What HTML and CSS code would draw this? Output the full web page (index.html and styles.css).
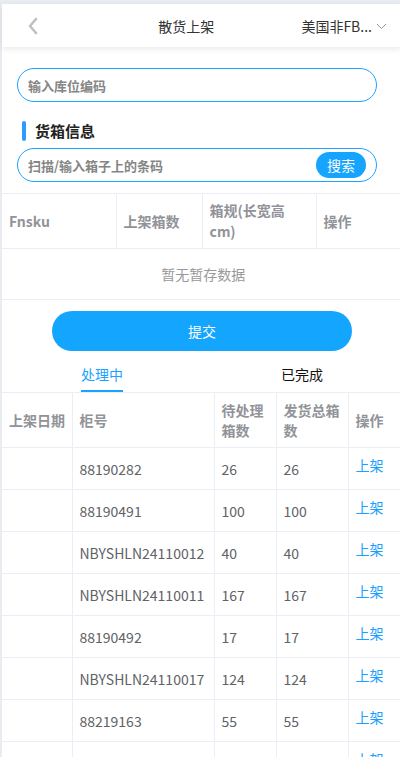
FILE: index.html
```html
<!DOCTYPE html>
<html>
<head>
    <meta charset="utf-8">
    <meta name="viewport" content="width=device-width, initial-scale=1">
    <title>散货上架</title>
    <link rel="stylesheet" href="styles.css">
</head>

<body>
<div class="page">
    <div class="nav-bar">
        <div class="nav-left">
            <svg class="icon-back" width="12" height="18" viewBox="0 0 12 18">
                <path d="M9 2 L3 9 L9 16" fill="none" stroke="#c0c0c0" stroke-width="2.6" stroke-linecap="round" stroke-linejoin="round"/>
            </svg>
        </div>
        <div class="nav-title">散货上架</div>
        <div class="nav-right">
            <span>美国非FB...</span>
            <svg class="icon-down" width="11" height="7" viewBox="0 0 11 7">
                <path d="M1 1 L5.5 5.5 L10 1" fill="none" stroke="#9a9a9a" stroke-width="1"/>
            </svg>
        </div>
    </div>

    <div class="field field-location">
        <input type="text" placeholder="输入库位编码">
    </div>

    <div class="section-title">
        <span class="bar"></span>货箱信息
    </div>

    <div class="field field-scan">
        <input type="text" placeholder="扫描/输入箱子上的条码">
        <button class="btn-search">搜索</button>
    </div>

    <table class="grid-table table-box">
        <colgroup>
            <col style="width:114px">
            <col style="width:86px">
            <col style="width:114px">
            <col style="width:86px">
        </colgroup>
        <tr class="head">
            <th>Fnsku</th>
            <th>上架箱数</th>
            <th>箱规(长宽高 cm)</th>
            <th>操作</th>
        </tr>
        <tr class="empty">
            <td colspan="4">暂无暂存数据</td>
        </tr>
    </table>

    <div class="submit-wrap">
        <button class="btn-submit">提交</button>
    </div>

    <div class="tabs">
        <div class="tab active"><span>处理中</span></div>
        <div class="tab"><span>已完成</span></div>
    </div>

    <table class="grid-table table-list">
        <colgroup>
            <col style="width:70px">
            <col style="width:142px">
            <col style="width:62px">
            <col style="width:72px">
            <col style="width:54px">
        </colgroup>
        <tr class="head">
            <th>上架日期</th>
            <th>柜号</th>
            <th>待处理箱数</th>
            <th>发货总箱数</th>
            <th>操作</th>
        </tr>
        <tr><td></td><td>88190282</td><td>26</td><td>26</td><td><a class="op-link">上架</a></td></tr>
        <tr><td></td><td>88190491</td><td>100</td><td>100</td><td><a class="op-link">上架</a></td></tr>
        <tr><td></td><td>NBYSHLN24110012</td><td>40</td><td>40</td><td><a class="op-link">上架</a></td></tr>
        <tr><td></td><td>NBYSHLN24110011</td><td>167</td><td>167</td><td><a class="op-link">上架</a></td></tr>
        <tr><td></td><td>88190492</td><td>17</td><td>17</td><td><a class="op-link">上架</a></td></tr>
        <tr><td></td><td>NBYSHLN24110017</td><td>124</td><td>124</td><td><a class="op-link">上架</a></td></tr>
        <tr><td></td><td>88219163</td><td>55</td><td>55</td><td><a class="op-link">上架</a></td></tr>
        <tr><td></td><td>BGHL23111657023</td><td>18</td><td>18</td><td><a class="op-link">上架</a></td></tr>
    </table>
</div>
</body>

</html>
```

FILE: styles.css
```css
* {
    box-sizing: border-box;
    margin: 0;
    padding: 0;
    font-family: "Noto Sans CJK SC", "Noto Sans", sans-serif;
}

html, body {
    height: 100%;
}

body {
    background: #e8ebf0;
    overflow: hidden;
}

.page {
    width: 400px;
    min-height: 100%;
    margin: 4px 0 0 2px;
    background: #fff;
}

/* 顶部导航 */
.nav-bar {
    display: flex;
    align-items: center;
    height: 43px;
    background: #fff;
    box-shadow: 0 2px 6px rgba(0, 0, 0, 0.09);
    position: relative;
    z-index: 2;
}

.nav-left {
    width: 69px;
    padding-left: 25px;
    display: flex;
    align-items: center;
}

.nav-title {
    flex: 1;
    text-align: center;
    font-size: 14px;
    color: #333;
}

.nav-right {
    display: flex;
    align-items: center;
    padding-right: 15px;
    font-size: 14px;
    color: #333;
}

.icon-down {
    margin-left: 4px;
    margin-top: 1px;
}

/* 输入框 */
.field {
    display: flex;
    align-items: center;
    height: 34px;
    margin: 0 25px 0 15px;
    border: 1px solid #1aa3ff;
    border-radius: 17px;
    padding: 0 10px;
}

.field-location {
    margin-top: 21px;
}

.field input {
    flex: 1;
    min-width: 0;
    border: none;
    outline: none;
    background: transparent;
    font-size: 13px;
    font-weight: bold;
    color: #333;
}

.field input::placeholder {
    color: #858585;
}

.field-scan {
    margin-top: 7px;
    padding-right: 10px;
}

.btn-search {
    flex-shrink: 0;
    width: 50px;
    height: 26px;
    border: none;
    border-radius: 13px;
    background: #16a4ff;
    color: #fff;
    font-size: 14px;
}

.section-title {
    display: flex;
    align-items: center;
    margin: 19px 0 0 20px;
    font-size: 15px;
    font-weight: bold;
    color: #222;
    line-height: 20px;
}

.section-title .bar {
    width: 4px;
    height: 20px;
    border-radius: 2px;
    background: #2d9bff;
    margin-right: 9px;
}

/* 表格 */
.grid-table {
    width: 400px;
    table-layout: fixed;
    border-collapse: collapse;
    font-size: 14px;
}

.grid-table th,
.grid-table td {
    border: 1px solid #ebeef5;
    padding: 0 4px 0 7px;
    text-align: left;
    vertical-align: middle;
}

.grid-table tr > :first-child {
    border-left: none;
}

.grid-table th {
    color: #919399;
    font-weight: bold;
    line-height: 20px;
}

.grid-table td {
    color: #606266;
}

.grid-table .head {
    height: 55px;
}

.table-box {
    margin-top: 11px;
}

.table-box th {
    line-height: 21px;
}

.table-box .empty {
    height: 51px;
}

.table-box .empty td {
    text-align: center;
    color: #999;
}

.table-list tr {
    height: 42px;
}

.op-link {
    display: inline-block;
    color: #1aa0ff;
    margin-bottom: 7px;
}

/* 提交 */
.submit-wrap {
    display: flex;
    justify-content: center;
    padding-top: 11px;
}

.btn-submit {
    width: 300px;
    height: 40px;
    border: none;
    border-radius: 20px;
    background: #14a6ff;
    color: #fff;
    font-size: 14px;
}

.tabs {
    display: flex;
    height: 41px;
}

.tab {
    flex: 1;
    display: flex;
    justify-content: center;
    align-items: flex-end;
    font-size: 14px;
    color: #111;
}

.tab span {
    padding-bottom: 6px;
    border-bottom: 2px solid transparent;
}

.tab.active span {
    color: #1aa3ff;
    border-bottom-color: #1aa3ff;
}
```
